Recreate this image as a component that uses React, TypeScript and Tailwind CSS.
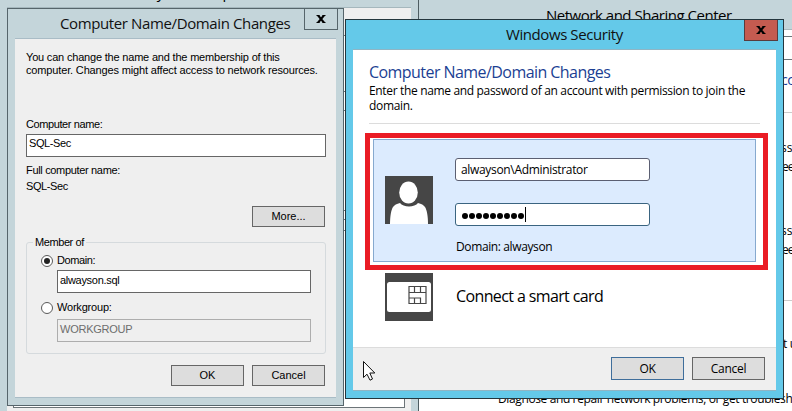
import type { ReactNode } from "react";

function CloseGlyph() {
  return (
    <svg width="10" height="8" viewBox="0 0 10 8" className="block">
      <path d="M1.8 0 L8.2 8 M8.2 0 L1.8 8" stroke="#000" strokeWidth="2.1" fill="none" />
      <path d="M.5 .5h3 M6.500 .5h3 M.5 7.500h3 M6.500 7.500h3" stroke="#000" strokeWidth="1" />
    </svg>
  );
}

function Button({ children, className = "" }: { children: ReactNode; className?: string }) {
  return (
    <button className={`flex w-[73px] items-center justify-center border bg-[#dddddd] ${className}`}>
      {children}
    </button>
  );
}

function Radio({ checked = false }: { checked?: boolean }) {
  return (
    <span className="flex size-3 items-center justify-center rounded-full border border-[#5a5a5a] bg-white">
      {checked && <span className="size-1.5 rounded-full bg-[#222]" />}
    </span>
  );
}

function SystemProperties() {
  return (
    <div className="absolute inset-y-0 left-0 flex w-[418px] flex-col bg-[#c4d5da] pr-[7px] pl-[7px]">
      <div className="h-2 overflow-hidden border-b border-[#a5b7bd]">
        <div className="-mt-[19px] ml-[142px] font-['Open_Sans',sans-serif] text-[15px] leading-[22px] tracking-[-0.5px]">
          System Properties
        </div>
      </div>
      <div className="flex grow items-start bg-[#efefef] pt-[27px] pr-[6px] pl-1.5">
        <div className="flex h-[373px] grow flex-col border border-[#6c7478] bg-white">
          <div className="h-14 border-b border-[#6c7478]" />
          <div className="h-[19px] border-b border-[#6c7478]" />
          <div className="h-[100px] border-b border-[#6c7478]" />
          <div className="h-[9px] border-b border-[#6c7478]" />
          <div className="h-[11px] border-b border-[#6c7478]" />
        </div>
      </div>
    </div>
  );
}

function NetworkCenter() {
  return (
    <div className="absolute inset-y-0 left-[418px] flex w-[374px] flex-col overflow-hidden border-l border-[#4e5d62] bg-white font-['Open_Sans',sans-serif] text-xs text-black">
      <div className="h-[30px] shrink-0 border-b border-[#a9b9be] bg-[#c4d5da] pt-1 pl-[127px] text-[15px] leading-[22px] tracking-[-0.48px] whitespace-nowrap">
        Network and Sharing Center
      </div>
      <div className="mt-1.5 h-6 shrink-0 border-y border-[#6c7478]" />
      <div className="flex h-[53px] shrink-0 items-start border-b border-[#cccccc] pt-3 pl-[362px]">
        <span className="text-sm leading-4 tracking-[-0.5px] text-[#123a9a]">cc</span>
      </div>
      <div className="flex h-[188px] shrink-0 flex-col border-b border-[#cccccc] pt-[25px] pl-[362px] leading-[19px]">
        <span>ss</span>
        <span className="pl-px tracking-[-1px]">ee</span>
        <span className="mt-[45px]">ss</span>
        <span className="pl-px tracking-[-1px]">ee</span>
      </div>
      <div className="mt-[33px] pl-[364px] leading-[19px] tracking-[-0.3px] whitespace-nowrap">t u</div>
      <div className="mt-[36px] pl-[79px] leading-[19px] tracking-[-0.38px] whitespace-nowrap">
        Diagnose and repair network problems, or get troublesh
      </div>
    </div>
  );
}

function NameDialog() {
  return (
    <div className="absolute top-2 left-[7px] flex h-[398px] w-[337px] flex-col border border-[#56656b] bg-[#c4d5da] px-[7px] pb-[7px] font-['Liberation_Sans',sans-serif] text-[11px] text-black">
      <div className="flex h-[29px] shrink-0 justify-between">
        <div className="pt-[3px] pl-[45px] font-['Open_Sans',sans-serif] text-[15px] leading-[22px] tracking-[-0.38px] whitespace-nowrap text-[#111]">
          Computer Name/Domain Changes
        </div>
        <div className="-mr-0.5 flex h-[21px] w-[34px] items-center justify-center border border-t-0 border-[#56656b]">
          <CloseGlyph />
        </div>
      </div>
      <div className="flex grow flex-col border-y border-[#a9bcc6] bg-[#efefef] pr-[10px] pl-[11px]">
        <p className="mt-3 leading-[13px] whitespace-nowrap">
          <span className="block tracking-[-0.19px]">You can change the name and the membership of this</span>
          <span className="block tracking-[-0.15px]">computer. Changes might affect access to network resources.</span>
        </p>
        <span className="mt-[41px] leading-[13px] tracking-[-0.4px]">Computer name:</span>
        <div className="mt-[3px] h-[23px] w-[300px] border border-[#666] bg-white pt-0.5 pl-0.5 leading-[13px] tracking-[-0.4px]">SQL-Sec</div>
        <span className="mt-[7px] leading-[13px] tracking-[-0.33px]">Full computer name:</span>
        <span className="mt-[3px] leading-[13px] tracking-[-0.4px]">SQL-Sec</span>
        <Button className="mr-px mt-[13px] h-[21px] self-end border-[#666]">More...</Button>
        <fieldset className="mt-[9px] h-[118px] w-[300px] rounded-[3px] border border-[#d5dadd] pl-3.5">
          <legend className="-ml-2 px-0.5 leading-[13px] tracking-[-0.42px]">Member of</legend>
          <div className="mt-[5px] flex h-[13px] items-center gap-1 leading-[13px]">
            <Radio checked />
            <span className="tracking-[-0.4px]">Domain:</span>
          </div>
          <div className="mt-[3px] ml-4 h-[23px] w-[254px] border border-[#666] bg-white pt-[3px] pl-0.5 leading-[13px] tracking-[-0.3px]">alwayson.sql</div>
          <div className="mt-2 flex h-[13px] items-center gap-1 leading-[13px]">
            <Radio />
            <span className="tracking-[-0.2px]">Workgroup:</span>
          </div>
          <div className="mt-[5px] ml-4 h-[23px] w-[254px] border border-[#adadad] pt-[3px] pl-0.5 leading-[13px] tracking-[-0.25px] text-[#6d6d6d]">WORKGROUP</div>
        </fieldset>
        <div className="mt-[11px] mr-px flex justify-end gap-2">
          <Button className="h-[21px] border-[#666]">OK</Button>
          <Button className="h-[21px] border-[#666]">Cancel</Button>
        </div>
      </div>
    </div>
  );
}

function UserTile() {
  return (
    <svg width="48" height="48" viewBox="0 0 48 48" className="-mt-px block shrink-0">
      <rect width="48" height="48" fill="#464646" />
      <ellipse cx="23.5" cy="16.5" rx="9.3" ry="11" fill="#fff" />
      <path d="M5 48 C5 41 6 34 8 31 Q10 28 15 27 C18 31.500 30 31.500 33 27 Q38 28 40 31 C42 34 43 41 43 48 Z" fill="#fff" />
    </svg>
  );
}

function SmartCardTile() {
  return (
    <svg width="48" height="48" viewBox="0 0 48 48" className="block shrink-0">
      <rect width="48" height="48" fill="#464646" />
      <rect x="2" y="9" width="44" height="30" rx="2.500" fill="#fff" />
      <path d="M24 13.500h17v17h-17z M24 19.500h17 M24 25h11.500v5.500 M29.500 13.500v6 M35.500 13.500v6 M29.500 25v5.500" fill="none" stroke="#464646" strokeWidth="1.200" />
    </svg>
  );
}

function SecurityDialog() {
  return (
    <div className="absolute top-[19px] left-[345px] flex h-[380px] w-[439px] flex-col border border-[#24363d] bg-[#64c9e9] px-[7px] pb-[7px] font-['Open_Sans',sans-serif] text-xs text-black">
      <div className="flex h-[29px] shrink-0 justify-between">
        <div className="pt-[3px] pl-[153px] text-[15px] leading-[22px] tracking-[-0.42px] whitespace-nowrap text-[#111]">
          Windows Security
        </div>
        <div className="-mr-0.5 flex h-[21px] w-[34px] items-center justify-center border border-t-0 border-[#593b3d] bg-[#c45b50]">
          <CloseGlyph />
        </div>
      </div>
      <div className="flex grow flex-col border-y border-[#8fb5c4] bg-white">
        <h1 className="mt-[11px] ml-4 text-base leading-[22px] tracking-[-0.56px] whitespace-nowrap text-[#1b3f93]">
          Computer Name/Domain Changes
        </h1>
        <p className="ml-4 leading-[15px] tracking-[-0.34px] whitespace-nowrap">
          <span className="block">Enter the name and password of an account with permission to join the</span>
          <span className="block">domain.</span>
        </p>
        <hr className="mt-[10px] mr-4 ml-4 border-[#dcdcdc]" />
        <div className="mt-[9px] ml-3 h-[137px] w-[403px] border-[5px] border-[#ea1c25] pt-px pr-[7px] pb-[3px] pl-[3px]">
          <div className="flex h-full items-center gap-[22px] border border-[#86a9cf] bg-[#dcebfe] pl-[11px]">
            <UserTile />
            <div className="flex flex-col self-stretch pt-[18px] whitespace-nowrap">
              <div className="h-[23px] w-[195px] rounded-[3px] border border-[#5b5f72] bg-white pl-[5px] leading-[22px] tracking-[-0.33px]">alwayson\Administrator</div>
              <div className="mt-[22px] flex h-[23px] w-[195px] items-center rounded-[3px] border border-[#3a6480] bg-white pl-1.5">
                <span className="mt-0.5 flex gap-px">
                  {Array.from({ length: 9 }, (_, i) => (
                    <span key={i} className="size-1.5 rounded-full bg-black" />
                  ))}
                </span>
                <span className="ml-px h-[15px] w-px bg-black" />
              </div>
              <span className="mt-3 ml-px leading-[18px] tracking-[-0.38px]">Domain: alwayson</span>
            </div>
          </div>
        </div>
        <div className="mt-[3px] ml-8 flex items-center gap-[23px]">
          <SmartCardTile />
          <span className="-mt-0.5 text-base leading-[22px] tracking-[-0.62px]">Connect a smart card</span>
        </div>
        <div className="mt-auto flex h-[43px] justify-end gap-2 border-t border-[#dcdcdc] bg-[#efefef] pt-[9px] pr-[11px]">
          <Button className="h-[23px] border-[#3f6e9b] tracking-[-0.3px]">OK</Button>
          <Button className="h-[23px] border-[#666] tracking-[-0.3px]">Cancel</Button>
        </div>
      </div>
    </div>
  );
}

export default function App() {
  return (
    <div className="relative h-[411px] w-[792px] overflow-hidden bg-[#c4d5da]">
      <SystemProperties />
      <NetworkCenter />
      <NameDialog />
      <SecurityDialog />
      <svg width="13" height="20" viewBox="0 0 13 20" className="absolute top-[361px] left-[363px]">
        <path d="M.5 .5V16.500L4 13.200L7 19.200L9.500 18L6.800 12H11.800Z" fill="#fff" stroke="#111" strokeWidth="1" />
      </svg>
    </div>
  );
}
